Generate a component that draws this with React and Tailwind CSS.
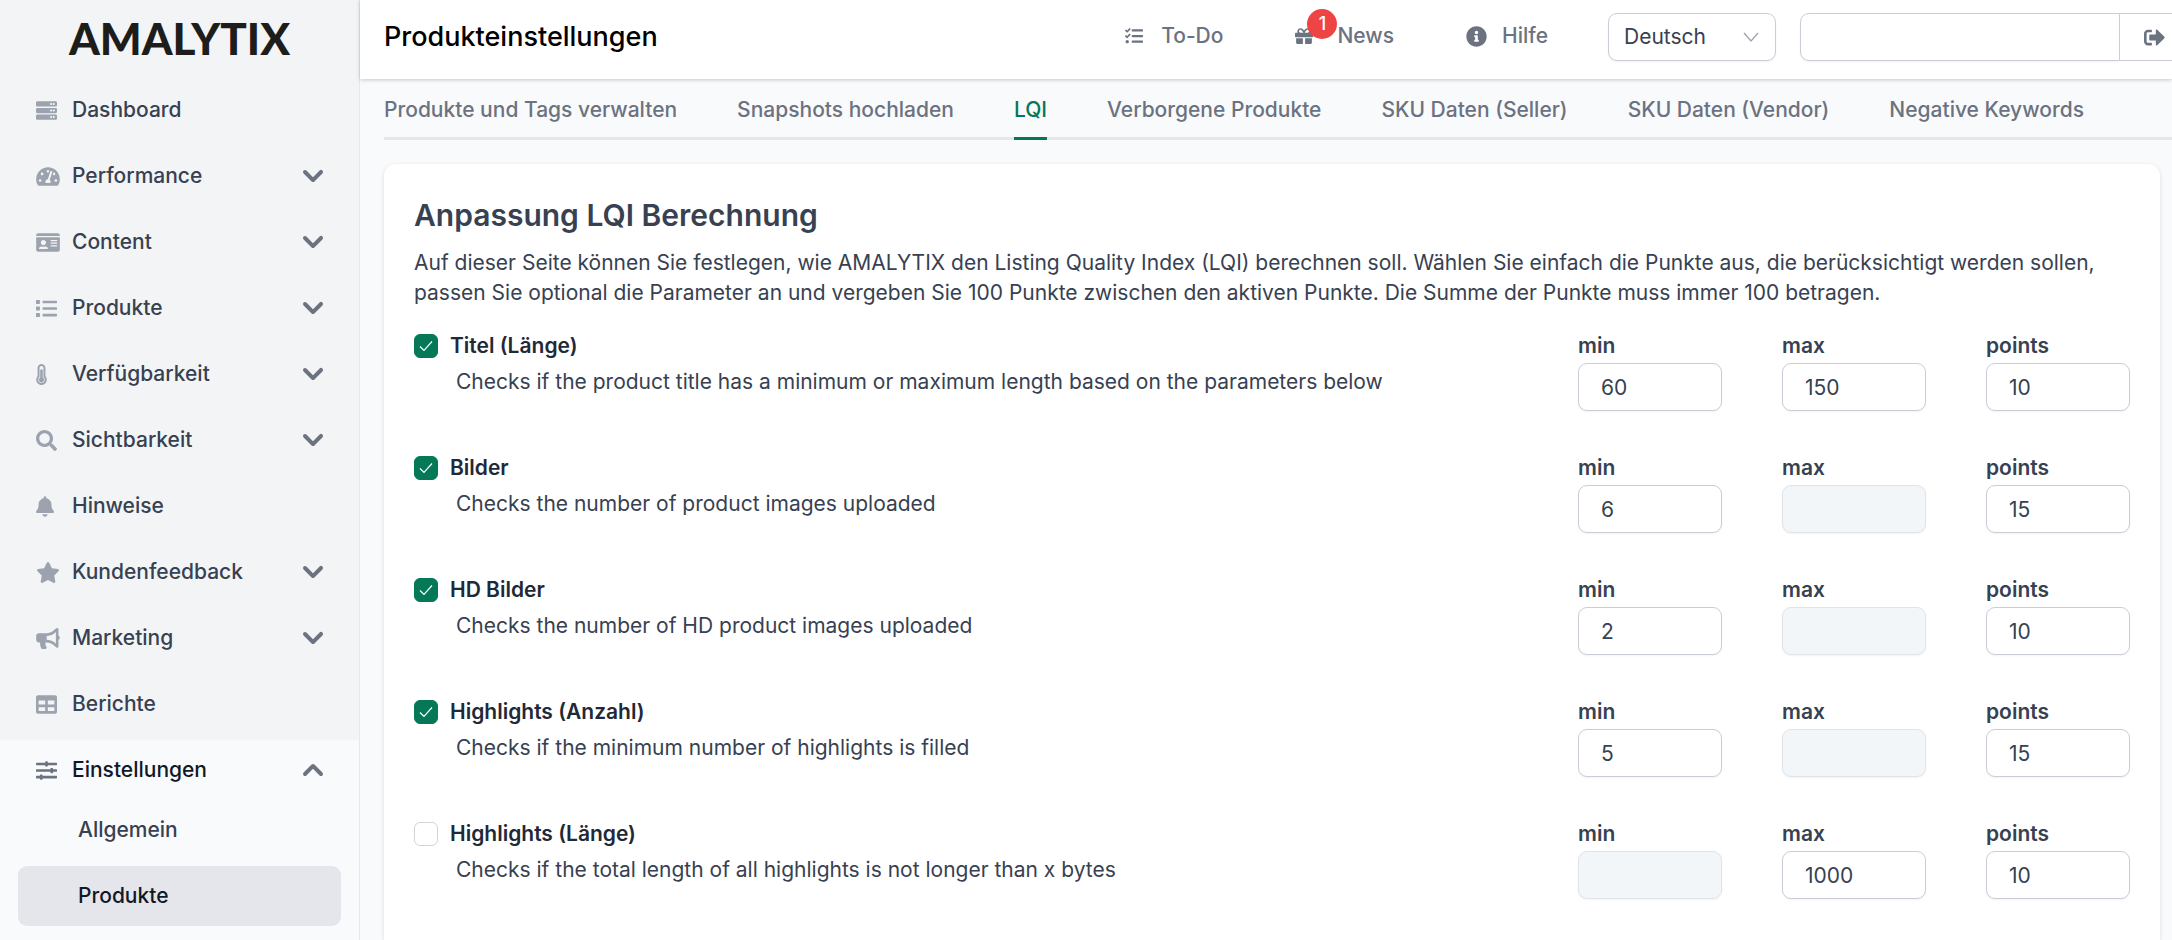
import { useState } from "react";
import {
  FaBell,
  FaBullhorn,
  FaGift,
  FaIdCard,
  FaInfoCircle,
  FaList,
  FaSearch,
  FaServer,
  FaSignOutAlt,
  FaSlidersH,
  FaStar,
  FaTable,
  FaTachometerAlt,
  FaTasks,
  FaThermometerThreeQuarters,
} from "react-icons/fa";
import { HiChevronDown, HiChevronUp } from "react-icons/hi";

const menu = [
  { label: "Dashboard", icon: FaServer, iconWidth: "w-[21px]" },
  { label: "Performance", icon: FaTachometerAlt, iconWidth: "w-6", expandable: true },
  { label: "Content", icon: FaIdCard, iconWidth: "w-6", expandable: true },
  { label: "Produkte", icon: FaList, iconWidth: "w-[21px]", expandable: true },
  { label: "Verfügbarkeit", icon: FaThermometerThreeQuarters, iconWidth: "w-[11px]", expandable: true },
  { label: "Sichtbarkeit", icon: FaSearch, iconWidth: "w-[21px]", expandable: true },
  { label: "Hinweise", icon: FaBell, iconWidth: "w-[18px]" },
  { label: "Kundenfeedback", icon: FaStar, iconWidth: "w-6", expandable: true },
  { label: "Marketing", icon: FaBullhorn, iconWidth: "w-6", expandable: true },
  { label: "Berichte", icon: FaTable, iconWidth: "w-[21px]" },
];

const tabs = [
  "Produkte und Tags verwalten",
  "Snapshots hochladen",
  "LQI",
  "Verborgene Produkte",
  "SKU Daten (Seller)",
  "SKU Daten (Vendor)",
  "Negative Keywords",
];

const initialRules = [
  {
    id: "title-length",
    name: "Titel (Länge)",
    text: "Checks if the product title has a minimum or maximum length based on the parameters below",
    active: true,
    min: "60",
    max: "150",
    points: "10",
  },
  { id: "images", name: "Bilder", text: "Checks the number of product images uploaded", active: true, min: "6", max: null, points: "15" },
  { id: "hd-images", name: "HD Bilder", text: "Checks the number of HD product images uploaded", active: true, min: "2", max: null, points: "10" },
  { id: "highlights", name: "Highlights (Anzahl)", text: "Checks if the minimum number of highlights is filled", active: true, min: "5", max: null, points: "15" },
  {
    id: "highlights-length",
    name: "Highlights (Länge)",
    text: "Checks if the total length of all highlights is not longer than x bytes",
    active: false,
    min: null,
    max: "1000",
    points: "10",
  },
];

function Sidebar() {
  return (
    <aside className="flex w-[360px] shrink-0 flex-col border-r border-gray-200 bg-[#f3f4f6]">
      <div className="flex h-20 items-center justify-center pb-1 font-['Lato',sans-serif] text-[44px] leading-none font-black text-[#1d1d1b]">
        AMALYTIX
      </div>
      <nav className="flex flex-1 flex-col gap-[6px]">
        {menu.map(({ label, icon: Icon, iconWidth, expandable }) => (
          <a key={label} href="#" className="flex h-[60px] items-center pr-[26px] pl-9 font-medium text-[#374151]">
            <span className="flex w-9 items-center">
              <Icon className={`h-[21px] text-[#9ca3af] ${iconWidth}`} />
            </span>
            <span className="flex-1">{label}</span>
            {expandable ? <HiChevronDown className="size-10 text-[#6b7280]" /> : null}
          </a>
        ))}
        <div className="flex-1 bg-[#f9fafc]">
          <a href="#" className="flex h-[60px] items-center pr-[26px] pl-9 font-medium text-[#111827]">
            <span className="flex w-9 items-center">
              <FaSlidersH className="h-[21px] w-[21px] text-[#6b7280]" />
            </span>
            <span className="flex-1">Einstellungen</span>
            <HiChevronUp className="size-10 text-[#6b7280]" />
          </a>
          <div className="flex flex-col gap-[6px] px-[18px]">
            <a href="#" className="flex h-[60px] items-center rounded-[9px] pl-[60px] font-medium text-[#374151]">
              Allgemein
            </a>
            <a href="#" className="flex h-[60px] items-center rounded-[9px] bg-[#e4e6eb] pl-[60px] font-medium text-[#111827]">
              Produkte
            </a>
          </div>
        </div>
      </nav>
    </aside>
  );
}

function Header() {
  return (
    <header className="z-10 flex h-[79px] shrink-0 items-start bg-white pt-[13px] pl-6 shadow-[0_1px_4px_rgba(0,0,0,0.2)]">
      <h1 className="flex h-12 flex-1 items-center text-[27px] font-medium text-black">Produkteinstellungen</h1>
      <nav className="mr-[60px] flex h-[46px] items-center gap-[72px] font-medium text-[#6b7280]">
        <a href="#" className="flex items-center gap-[18px]">
          <FaTasks className="size-[18px]" />
          To-Do
        </a>
        <a href="#" className="relative flex items-center gap-6">
          <FaGift className="size-[18px]" />
          News
          <span className="absolute -top-3 left-3 flex size-[30px] items-center justify-center rounded-full bg-[#ef4444] text-lg leading-none text-white">
            1
          </span>
        </a>
        <a href="#" className="flex items-center gap-[15px]">
          <FaInfoCircle className="size-[21px]" />
          Hilfe
        </a>
      </nav>
      <div className="relative mr-6">
        <select
          aria-label="Sprache"
          className="h-12 w-[168px] appearance-none rounded-[9px] border border-[#c9ced6] bg-white pl-[15px] text-[#374151] shadow-xs outline-none"
        >
          <option>Deutsch</option>
          <option>English</option>
        </select>
        <svg className="pointer-events-none absolute top-[19px] right-[17px] h-[10px] w-4" viewBox="0 0 16 10" fill="none" stroke="#9ca3af">
          <path d="M1 1l7 8 7-8" strokeWidth="1.3" />
        </svg>
      </div>
      <input
        aria-label="Konto"
        className="h-12 w-80 rounded-l-[9px] border border-[#c9ced6] bg-white px-6 shadow-xs outline-none"
      />
      <button type="button" aria-label="Abmelden" className="flex h-12 w-[52px] items-center border-y border-[#c9ced6] bg-white pl-6 text-[#6b7280]">
        <FaSignOutAlt className="size-[21px]" />
      </button>
    </header>
  );
}

function NumberField({ id, label, value, onChange }) {
  return (
    <div className="flex w-36 flex-col gap-[2px]">
      <label htmlFor={id} className="font-semibold text-[#374151]">
        {label}
      </label>
      <input
        id={id}
        type="text"
        inputMode="numeric"
        value={value ?? ""}
        disabled={value === null}
        onChange={(event) => onChange(event.target.value)}
        className="h-12 w-full rounded-[9px] border border-[#c9ced6] bg-white px-[22px] text-[#374151] shadow-xs outline-none disabled:border-[#e0e4e9] disabled:bg-[#f3f6f9]"
      />
    </div>
  );
}

function RuleRow({ rule, onChange }) {
  return (
    <div className="flex justify-between">
      <div>
        <label className="flex items-center gap-3 font-semibold text-[#1f2937]">
          <span className="relative flex">
            <input
              type="checkbox"
              checked={rule.active}
              onChange={(event) => onChange({ active: event.target.checked })}
              className="size-6 appearance-none rounded-[6px] border border-[#d1d5db] bg-white checked:border-[#047857] checked:bg-[#047857]"
            />
            {rule.active ? (
              <svg className="pointer-events-none absolute inset-0 size-6" viewBox="0 0 24 24" fill="none" stroke="white">
                <path d="M6 12.5l4 4 8-9" strokeWidth="1.2" />
              </svg>
            ) : null}
          </span>
          {rule.name}
        </label>
        <p className="mt-[6px] pl-[42px] text-[#374151]">{rule.text}</p>
      </div>
      <div className="flex shrink-0 gap-[60px]">
        <NumberField id={`${rule.id}-min`} label="min" value={rule.min} onChange={(min) => onChange({ min })} />
        <NumberField id={`${rule.id}-max`} label="max" value={rule.max} onChange={(max) => onChange({ max })} />
        <NumberField id={`${rule.id}-points`} label="points" value={rule.points} onChange={(points) => onChange({ points })} />
      </div>
    </div>
  );
}

function App() {
  const [tab, setTab] = useState("LQI");
  const [rules, setRules] = useState(initialRules);

  const updateRule = (id, changes) => {
    setRules(rules.map((rule) => (rule.id === id ? { ...rule, ...changes } : rule)));
  };

  return (
    <div className="flex min-h-screen bg-[#f9fafc] font-['Inter',sans-serif] text-[21px] leading-[30px]">
      <Sidebar />
      <div className="flex min-w-0 flex-1 flex-col">
        <Header />
        <div className="ml-6 flex h-[61px] shrink-0 gap-[60px] border-b-[3px] border-[#e5e7eb]">
          {tabs.map((name) => (
            <button
              key={name}
              type="button"
              onClick={() => setTab(name)}
              className={
                name === tab
                  ? "-mb-[3px] border-b-[3px] border-[#047857] pt-1 font-medium whitespace-nowrap text-[#047857]"
                  : "-mb-[3px] border-b-[3px] border-transparent pt-1 font-medium whitespace-nowrap text-[#6b7280]"
              }
            >
              {name}
            </button>
          ))}
        </div>
        <main className="mt-6 mr-3 ml-6 flex-1 rounded-t-xl bg-white p-[30px] shadow-[0_1px_4px_rgba(0,0,0,0.12)]">
          <h2 className="text-[30px] leading-[42px] font-semibold text-[#374151]">Anpassung LQI Berechnung</h2>
          <p className="mt-3 text-[#374151]">
            Auf dieser Seite können Sie festlegen, wie AMALYTIX den Listing Quality Index (LQI) berechnen soll. Wählen Sie
            einfach die Punkte aus, die berücksichtigt werden sollen, passen Sie optional die Parameter an und vergeben Sie
            100 Punkte zwischen den aktiven Punkte. Die Summe der Punkte muss immer 100 betragen.
          </p>
          <div className="mt-[23px] flex flex-col gap-[42px]">
            {rules.map((rule) => (
              <RuleRow key={rule.id} rule={rule} onChange={(changes) => updateRule(rule.id, changes)} />
            ))}
          </div>
        </main>
      </div>
    </div>
  );
}

export default App;
